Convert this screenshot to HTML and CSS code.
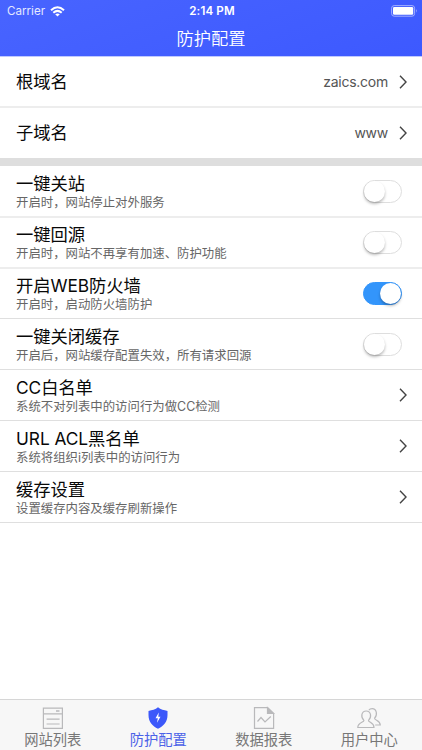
FILE: index.html
```html
<!DOCTYPE html>
<html lang="zh-CN">
<head>
<meta charset="utf-8">
<title>防护配置</title>
<link rel="stylesheet" href="styles.css">
</head>
<body>
<div class="app">
  <header class="header">
    <div class="status">
      <div class="carrier"><span>Carrier</span>
        <svg width="15" height="11" viewBox="0 0 15 11" fill="none" stroke="#fff" stroke-width="2"><path d="M1 4.2Q7.5-1.8 14 4.2M3.3 6.7Q7.5 3 11.7 6.7"/><path d="M5.2 8.2Q7.5 6.6 9.8 8.2L7.5 10.6Z" fill="#fff" stroke="none"/></svg>
      </div>
      <span class="time">2:14 PM</span>
      <svg class="battery" width="27" height="12" viewBox="0 0 27 12"><rect x=".6" y=".6" width="23" height="10.6" rx="2.6" fill="none" stroke="#a3b0ff"/><rect x="2" y="2" width="20.2" height="7.8" rx="1.3" fill="#fff"/><path d="M25 4q1.6 1.8 0 3.8z" fill="#a3b0ff"/></svg>
    </div>
    <h1 class="title">防护配置</h1>
  </header>
  <main class="content">
    <section class="domains">
      <div class="row soft"><span class="name">根域名</span><span class="value">zaics.com</span><svg class="chevron" viewBox="0 0 8 14"><path d="M1 .8 7 7 1 13.2"/></svg></div>
      <div class="row plain"><span class="name">子域名</span><span class="value">www</span><svg class="chevron" viewBox="0 0 8 14"><path d="M1 .8 7 7 1 13.2"/></svg></div>
    </section>
    <section class="settings">
      <div class="row soft"><div class="text"><div class="name">一键关站</div><div class="desc">开启时，网站停止对外服务</div></div><span class="switch"></span></div>
      <div class="row soft"><div class="text"><div class="name">一键回源</div><div class="desc">开启时，网站不再享有加速、防护功能</div></div><span class="switch"></span></div>
      <div class="row"><div class="text"><div class="name">开启WEB防火墙</div><div class="desc">开启时，启动防火墙防护</div></div><span class="switch on"></span></div>
      <div class="row"><div class="text"><div class="name">一键关闭缓存</div><div class="desc">开启后，网站缓存配置失效，所有请求回源</div></div><span class="switch"></span></div>
      <div class="row"><div class="text"><div class="name">CC白名单</div><div class="desc">系统不对列表中的访问行为做CC检测</div></div><svg class="chevron" viewBox="0 0 8 14"><path d="M1 .8 7 7 1 13.2"/></svg></div>
      <div class="row"><div class="text"><div class="name">URL ACL黑名单</div><div class="desc">系统将组织i列表中的访问行为</div></div><svg class="chevron" viewBox="0 0 8 14"><path d="M1 .8 7 7 1 13.2"/></svg></div>
      <div class="row"><div class="text"><div class="name">缓存设置</div><div class="desc">设置缓存内容及缓存刷新操作</div></div><svg class="chevron" viewBox="0 0 8 14"><path d="M1 .8 7 7 1 13.2"/></svg></div>
    </section>
  </main>
  <nav class="tabs">
    <div class="tab">
      <svg width="24" height="24" viewBox="0 0 24 24" fill="none" stroke="#b9b9bb" stroke-width="1.2"><path d="M2.4 2.1h19v20.3h-19zM2.4 7.8h19M5.6 13.2h13M5.6 18h13"/><path d="M15 5h3.5" stroke-width="1.5"/></svg>
      <span>网站列表</span>
    </div>
    <div class="tab active">
      <svg width="24" height="24" viewBox="0 0 24 24"><path d="M12 1.3C9.4 3.4 6 4.4 2.5 4.9V9c0 7 4 10.900 9.500 13.800C17.500 19.900 21.500 16 21.500 9V4.900C18 4.400 14.600 3.400 12 1.300Z" fill="#3c58fa"/><path d="M12.800 6.500 9.500 12.300h2.300l-.8 4.400 3.500-6h-2.200z" fill="#fff"/></svg>
      <span>防护配置</span>
    </div>
    <div class="tab">
      <svg width="24" height="24" viewBox="0 0 24 24" fill="none" stroke="#b9b9bb" stroke-width="1.2"><path d="M2.500 1.600H15.500L21.600 7.500V22.400H2.500Z"/><path d="M15.500 1.600V7.500H21.600Z" fill="#b9b9bb"/><path d="M5.500 15.500 9 11.500 13 16 18.800 10.500"/></svg>
      <span>数据报表</span>
    </div>
    <div class="tab">
      <svg width="24" height="24" viewBox="0 0 24 24" fill="none" stroke="#b9b9bb" stroke-width="1.2"><path d="M6.900 14.400C3.300 10.900 4.500 5 9.200 5S15.100 10.900 11.500 14.400C11.500 16.500 17 16.500 17 21.500H.8C.8 16.500 6.900 16.500 6.900 14.400Z"/><path d="M11.800 4.300C12.500 3.200 13.600 2.600 15.200 2.600 19.600 2.600 20.800 8.800 17.600 12.200 17.600 14.600 23 14 23.300 19H18.200"/></svg>
      <span>用户中心</span>
    </div>
  </nav>
</div>
</body>
</html>
```
FILE: styles.css
```css
* { box-sizing: border-box; }
body { margin: 0; background: #fff; font-family: Inter, "Noto Sans CJK SC", sans-serif; }
.app { width: 422px; height: 750px; display: flex; flex-direction: column; overflow: hidden; }
.header { height: 57px; flex: none; color: #fff; background: linear-gradient(160deg, #4864ff, #3d59ff); border-bottom: 1px solid #bfc9ff; }
.status { height: 22px; display: grid; grid-template-columns: 1fr auto 1fr; align-items: center; padding: 0 5px 0 7px; font-size: 11.6px; }
.carrier { display: flex; align-items: center; gap: 5px; color: #e4e8ff; letter-spacing: 0; }
.time { font-weight: 600; font-size: 11.6px; letter-spacing: .15px; }
.battery { justify-self: end; margin-right: -1px; }
.title { margin: 0; height: 34px; line-height: 34px; font-size: 17.3px; font-weight: 350; text-align: center; }
.content { flex: 1; }
.domains { height: 109px; border-bottom: 8px solid #dedede; }
.row { height: 51px; display: flex; align-items: center; padding: 0 15px 0 16px; border-bottom: 1px solid #dfdfdf; }
.domains .row:first-child { height: 50px; }
.soft { border-bottom-color: #ededed; box-shadow: 0 1px #ededed; }
.plain { border-bottom: 0; }
.text { flex: 1; padding-top: 1px; }
.name { flex: 1; font-size: 17.3px; line-height: 21px; color: #080808; white-space: nowrap; }
.text .name { letter-spacing: -.05px; }
.desc { font-size: 12.4px; line-height: 17px; color: #666; white-space: nowrap; }
.value { font-size: 14px; color: #555; margin-right: 11px; letter-spacing: -.25px; }
.chevron { width: 8px; height: 14px; fill: none; stroke: #444; stroke-width: 1.4; }
.switch { width: 39px; height: 23px; margin: 1px 5px 0 0; border: 1px solid #dedede; border-radius: 12px; display: flex; }
.switch::before { content: ""; width: 21px; height: 21px; border-radius: 50%; background: #fff; box-shadow: 0 2px 3px rgba(0,0,0,.28); }
.on { background: #3395fb; border-color: #3395fb; justify-content: flex-end; }
.tabs { height: 51px; flex: none; display: grid; grid-template-columns: repeat(4, 1fr); background: #f7f7f7; border-top: 1px solid #d6d6d6; }
.tab { display: flex; flex-direction: column; align-items: center; padding-top: 6px; font-size: 14.3px; line-height: 20px; color: #777; }
.tab svg { flex: none; }
.active { color: #4b62e8; }
```
